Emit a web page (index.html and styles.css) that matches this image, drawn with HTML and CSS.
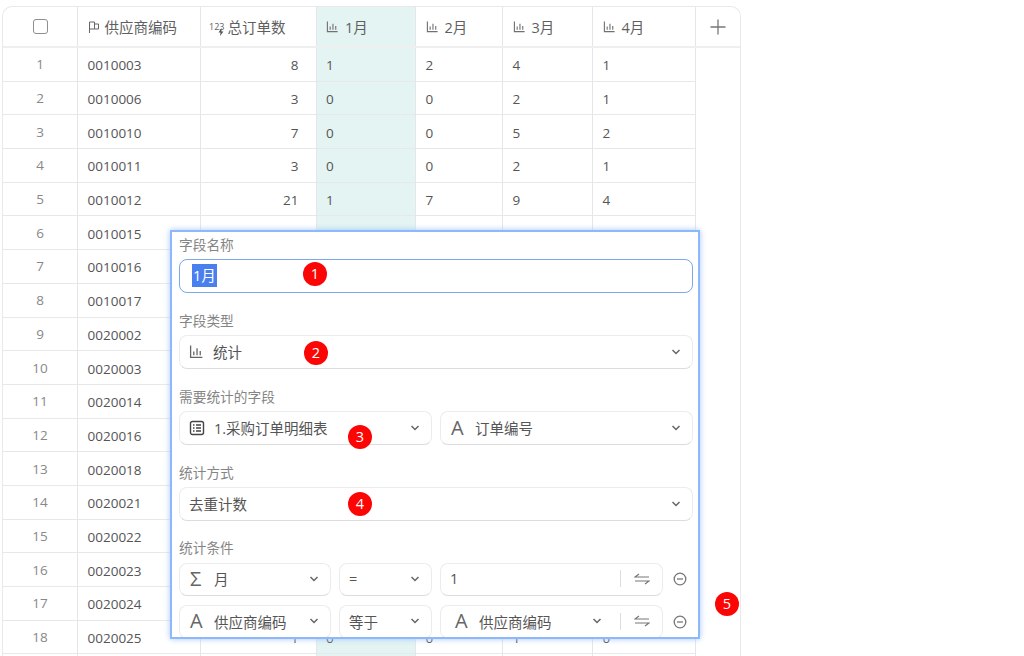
FILE: index.html
```html
<!DOCTYPE html>
<html lang="zh-CN">
  <head>
    <meta charset="UTF-8" />
    <title>统计字段配置</title>
    <link rel="stylesheet" href="styles.css">
  </head>
  <body>
    <svg class="defs" width="0" height="0">
      <symbol id="bars" viewBox="0 0 14 14"><path d="M1.5 1.5v11h11M4.5 7v3.5M7.5 4v6.5M10.5 6.5v4" fill="none" stroke="currentColor" stroke-width="1.2"/></symbol>
      <symbol id="chev" viewBox="0 0 10 6"><path d="M1.5 1l3.5 3.5 3.5-3.5" fill="none" stroke="currentColor" stroke-width="1.5"/></symbol>
      <symbol id="swap" viewBox="0 0 16 12"><path d="M15 4H1l4-3M1 8h14l-4 3" fill="none" stroke="currentColor" stroke-width="1.2"/></symbol>
      <symbol id="minus" viewBox="0 0 14 14"><circle cx="7" cy="7" r="5.8" fill="none" stroke="currentColor" stroke-width="1.3"/><path d="M4 7h6" stroke="currentColor" stroke-width="1.3"/></symbol>
    </svg>

    <div class="sheet">
      <div class="head">
        <div class="th th-check"><span class="checkbox"></span></div>
        <div class="th"><svg class="ic-flag" viewBox="0 0 12 12"><path d="M1.5 12V1h5v2h4v5h-4V3M6.5 8h-5" fill="none" stroke="currentColor"/></svg>供应商编码</div>
        <div class="th th-num"><span class="num-mark">123</span><svg class="ic-bolt" viewBox="0 0 6 8"><path d="M3.5 0L0.5 4.5h2L2 8l3.5-4.5h-2z" fill="currentColor"/></svg>总订单数</div>
        <div class="th th-on"><svg class="ic-bars"><use href="#bars"/></svg>1月</div>
        <div class="th"><svg class="ic-bars"><use href="#bars"/></svg>2月</div>
        <div class="th"><svg class="ic-bars"><use href="#bars"/></svg>3月</div>
        <div class="th"><svg class="ic-bars"><use href="#bars"/></svg>4月</div>
        <div class="th th-add"><svg class="ic-plus" viewBox="0 0 16 16"><path d="M8 0.5v15M0.5 8h15" stroke="currentColor" stroke-width="1.3"/></svg></div>
      </div>

      <div class="row"><div class="idx">1</div><div class="td">0010003</div><div class="td td-num">8</div><div class="td td-on">1</div><div class="td">2</div><div class="td">4</div><div class="td">1</div></div>
      <div class="row"><div class="idx">2</div><div class="td">0010006</div><div class="td td-num">3</div><div class="td td-on">0</div><div class="td">0</div><div class="td">2</div><div class="td">1</div></div>
      <div class="row"><div class="idx">3</div><div class="td">0010010</div><div class="td td-num">7</div><div class="td td-on">0</div><div class="td">0</div><div class="td">5</div><div class="td">2</div></div>
      <div class="row"><div class="idx">4</div><div class="td">0010011</div><div class="td td-num">3</div><div class="td td-on">0</div><div class="td">0</div><div class="td">2</div><div class="td">1</div></div>
      <div class="row"><div class="idx">5</div><div class="td">0010012</div><div class="td td-num">21</div><div class="td td-on">1</div><div class="td">7</div><div class="td">9</div><div class="td">4</div></div>
      <div class="row"><div class="idx">6</div><div class="td">0010015</div><div class="td td-num">1</div><div class="td td-on">0</div><div class="td">0</div><div class="td">1</div><div class="td">0</div></div>
      <div class="row"><div class="idx">7</div><div class="td">0010016</div><div class="td td-num"></div><div class="td td-on"></div><div class="td"></div><div class="td"></div><div class="td"></div></div>
      <div class="row"><div class="idx">8</div><div class="td">0010017</div><div class="td td-num"></div><div class="td td-on"></div><div class="td"></div><div class="td"></div><div class="td"></div></div>
      <div class="row"><div class="idx">9</div><div class="td">0020002</div><div class="td td-num"></div><div class="td td-on"></div><div class="td"></div><div class="td"></div><div class="td"></div></div>
      <div class="row"><div class="idx">10</div><div class="td">0020003</div><div class="td td-num"></div><div class="td td-on"></div><div class="td"></div><div class="td"></div><div class="td"></div></div>
      <div class="row"><div class="idx">11</div><div class="td">0020014</div><div class="td td-num"></div><div class="td td-on"></div><div class="td"></div><div class="td"></div><div class="td"></div></div>
      <div class="row"><div class="idx">12</div><div class="td">0020016</div><div class="td td-num"></div><div class="td td-on"></div><div class="td"></div><div class="td"></div><div class="td"></div></div>
      <div class="row"><div class="idx">13</div><div class="td">0020018</div><div class="td td-num"></div><div class="td td-on"></div><div class="td"></div><div class="td"></div><div class="td"></div></div>
      <div class="row"><div class="idx">14</div><div class="td">0020021</div><div class="td td-num"></div><div class="td td-on"></div><div class="td"></div><div class="td"></div><div class="td"></div></div>
      <div class="row"><div class="idx">15</div><div class="td">0020022</div><div class="td td-num"></div><div class="td td-on"></div><div class="td"></div><div class="td"></div><div class="td"></div></div>
      <div class="row"><div class="idx">16</div><div class="td">0020023</div><div class="td td-num"></div><div class="td td-on"></div><div class="td"></div><div class="td"></div><div class="td"></div></div>
      <div class="row"><div class="idx">17</div><div class="td">0020024</div><div class="td td-num"></div><div class="td td-on"></div><div class="td"></div><div class="td"></div><div class="td"></div></div>
      <div class="row"><div class="idx">18</div><div class="td">0020025</div><div class="td td-num">1</div><div class="td td-on">0</div><div class="td">0</div><div class="td">1</div><div class="td">0</div></div>
      <div class="row"><div class="idx"></div><div class="td"></div><div class="td td-num"></div><div class="td td-on"></div><div class="td"></div><div class="td"></div><div class="td"></div></div>
    </div>

    <!-- 字段配置弹窗 -->
    <div class="panel">
      <div class="field">
        <div class="label">字段名称</div>
        <div class="ctl ctl-focus"><span class="picked">1月</span></div>
      </div>

      <div class="field">
        <div class="label">字段类型</div>
        <div class="ctl"><svg class="ctl-bars"><use href="#bars"/></svg><span class="grow">统计</span><svg class="chev"><use href="#chev"/></svg></div>
      </div>

      <div class="field">
        <div class="label">需要统计的字段</div>
        <div class="pair">
          <div class="ctl">
            <svg class="ctl-table" viewBox="0 0 16 16"><rect x="1.5" y="1.5" width="13" height="13" rx="2" fill="none" stroke="currentColor" stroke-width="1.4"/><path d="M4 5h1.5M7 5h5M4 8h1.5M7 8h5M4 11h1.5M7 11h5" stroke="currentColor" stroke-width="1.3"/></svg>
            <span class="grow">1.采购订单明细表</span><svg class="chev"><use href="#chev"/></svg>
          </div>
          <div class="ctl"><span class="glyph">A</span><span class="grow">订单编号</span><svg class="chev"><use href="#chev"/></svg></div>
        </div>
      </div>

      <div class="field field-last">
        <div class="label">统计方式</div>
        <div class="ctl"><span class="grow">去重计数</span><svg class="chev"><use href="#chev"/></svg></div>
      </div>

      <div class="field">
        <div class="label">统计条件</div>
        <div class="cond">
          <div class="ctl"><span class="glyph">Σ</span><span class="grow">月</span><svg class="chev"><use href="#chev"/></svg></div>
          <div class="ctl"><span class="grow">=</span><svg class="chev"><use href="#chev"/></svg></div>
          <div class="ctl"><span class="grow">1</span><i class="split"></i><svg class="swap"><use href="#swap"/></svg></div>
          <svg class="minus"><use href="#minus"/></svg>

          <div class="ctl"><span class="glyph">A</span><span class="grow">供应商编码</span><svg class="chev"><use href="#chev"/></svg></div>
          <div class="ctl"><span class="grow">等于</span><svg class="chev"><use href="#chev"/></svg></div>
          <div class="ctl ctl-inset"><span class="glyph">A</span><span class="grow">供应商编码</span><svg class="chev"><use href="#chev"/></svg><i class="split"></i><svg class="swap"><use href="#swap"/></svg></div>
          <svg class="minus"><use href="#minus"/></svg>
        </div>
      </div>
    </div>

    <span class="badge badge-1">1</span>
    <span class="badge badge-2">2</span>
    <span class="badge badge-3">3</span>
    <span class="badge badge-4">4</span>
    <span class="badge badge-5">5</span>
  </body>
</html>
```

FILE: styles.css
```css
html,
body {
  margin: 0;
  height: 656px;
  overflow: hidden;
  background: #fff;
}

body {
  position: relative;
  font-family: "Open Sans", "Noto Sans CJK SC", sans-serif;
  font-size: 13.5px;
  color: #555;
}

.defs {
  position: absolute;
}

/* 表格 */
.sheet {
  box-sizing: border-box;
  width: 739px;
  margin: 6px 0 0 2px;
  border: 1px solid #e9e9ec;
  border-bottom: 0;
  border-radius: 10px 10px 0 0;
  overflow: hidden;
}

.head,
.row {
  display: grid;
  grid-template-columns: 75px 123px 115.5px 99.5px 87px 90px 103px;
}

.head {
  grid-template-columns: 75px 123px 115.5px 99.5px 87px 90px 103px 43px;
  height: 41px;
  border-bottom: 2px solid #efefef;
  box-sizing: border-box;
}

.row {
  height: 33.7px;
  box-sizing: border-box;
}

.th {
  display: flex;
  align-items: center;
  padding-left: 9.5px;
  border-right: 1px solid #e6e6ea;
  font-size: 14.5px;
  color: #5f5f5f;
}

.th-check {
  justify-content: center;
  padding-left: 0;
}

.th-num {
  padding-left: 8px;
}

.th-on {
  background: #e4f4f2;
}

.th-add {
  justify-content: center;
  padding-left: 0;
  border-right: 0;
}

.checkbox {
  box-sizing: border-box;
  width: 15px;
  height: 15px;
  border: 1.5px solid #8f8f8f;
  border-radius: 3px;
}

.ic-flag {
  width: 12px;
  height: 12px;
  margin-right: 5px;
  color: #666;
}

.num-mark {
  margin-right: -2px;
  font-size: 9px;
}

.ic-bolt {
  width: 6px;
  height: 8px;
  margin-right: -1px;
  position: relative;
  top: 5px;
  left: -4px;
  color: #555;
}

.ic-bars {
  width: 13px;
  height: 13px;
  margin-right: 6px;
  color: #707070;
}

.ic-plus {
  width: 16px;
  height: 16px;
  color: #777;
}

.idx,
.td {
  display: flex;
  align-items: center;
  box-sizing: border-box;
  border-right: 1px solid #e6e6ea;
  border-bottom: 1px solid #e8e8ea;
}

.idx {
  justify-content: center;
  color: #888;
}

.td {
  padding-left: 9.5px;
  padding-top: 2px;
}

.td-num {
  justify-content: flex-end;
  padding-left: 0;
  padding-right: 17px;
}

.td-on {
  background: #e4f4f2;
}

/* 弹窗 */
.panel {
  position: absolute;
  left: 170px;
  top: 230px;
  box-sizing: border-box;
  width: 530px;
  height: 408.5px;
  padding: 3px 5px 0 7px;
  background: #fff;
  border: 2px solid #8db8fb;
  box-shadow: 0 0 6px #a4c6fc;
  overflow: hidden;
}

.field {
  margin-bottom: 18.2px;
}

.field-last {
  margin-bottom: 17.6px;
}

.label {
  height: 20px;
  margin-bottom: 4.3px;
  font-size: 13.7px;
  line-height: 20px;
  color: #858585;
}

.ctl {
  display: flex;
  align-items: center;
  box-sizing: border-box;
  height: 33.5px;
  padding: 0 11px 1px 9px;
  background: #fff;
  border: 1px solid #ececec;
  border-bottom-color: #dcdcdc;
  border-radius: 8px;
  font-size: 14.5px;
  color: #555;
}

.ctl-focus {
  padding-left: 12px;
  border: 1px solid #7ea6ea;
}

.ctl-inset {
  padding-left: 13px;
}

.picked {
  padding: 0 1px;
  line-height: 23px;
  background: #4a7ff0;
  color: #fff;
}

.grow {
  flex: 1;
}

.pair {
  display: grid;
  grid-template-columns: 1fr 1fr;
  gap: 8px;
}

.cond {
  display: grid;
  grid-template-columns: 152px 93px 223px 30px;
  column-gap: 8px;
  row-gap: 9px;
  align-items: center;
}

.cond .minus {
  margin-left: 2px;
}

.glyph {
  width: 24px;
  padding-left: 1px;
  font-size: 20px;
  line-height: 24px;
  color: #666;
}

.ctl-bars {
  width: 15px;
  height: 15px;
  margin-right: 9px;
  color: #666;
}

.ctl-table {
  width: 16px;
  height: 16px;
  margin-right: 9px;
  color: #444;
}

.chev {
  width: 10px;
  height: 6px;
  color: #666;
}

.split {
  width: 1px;
  height: 17px;
  margin: 0 13px 0 10px;
  background: #ddd;
}

.chev + .split {
  margin-left: 18px;
}

.swap {
  width: 16px;
  height: 12px;
  margin-right: 1px;
  color: #777;
}

.minus {
  width: 14px;
  height: 14px;
  color: #777;
}

/* 序号标记 */
.badge {
  position: absolute;
  width: 24px;
  height: 24px;
  border-radius: 50%;
  background: #fb0505;
  color: #fff;
  font-size: 14.5px;
  line-height: 24px;
  text-align: center;
}

.badge-1 { left: 303px; top: 262px; }
.badge-2 { left: 304px; top: 341px; }
.badge-3 { left: 348px; top: 425px; }
.badge-4 { left: 348px; top: 492px; }
.badge-5 { left: 715px; top: 592px; }
```
